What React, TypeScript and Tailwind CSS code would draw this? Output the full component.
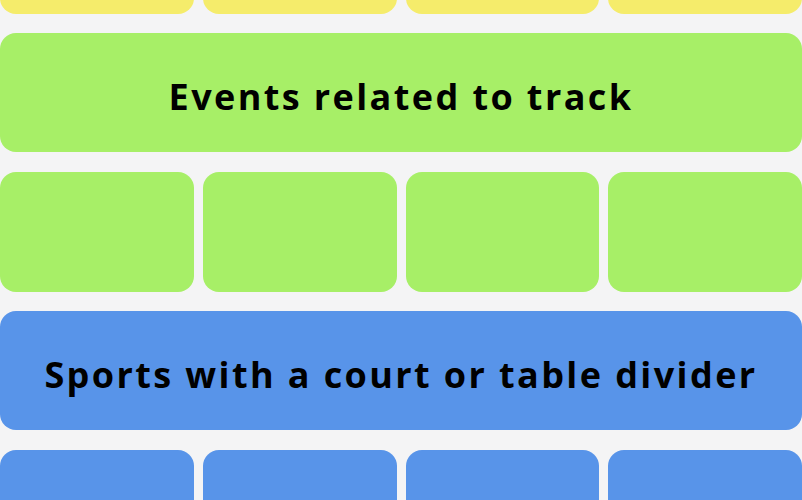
const groups = [
  { label: "", tile: "bg-[#f5ec6b]" },
  { label: "Events related to track", tile: "bg-[#a7ef67]" },
  { label: "Sports with a court or table divider", tile: "bg-[#5894e9]" },
];

function TileRow({ color }: { color: string }) {
  return (
    <div className="grid grid-cols-4 gap-x-[9px]">
      {[0, 1, 2, 3].map((i) => (
        <div key={i} className={`h-[120px] rounded-[16px] ${color}`} />
      ))}
    </div>
  );
}

export default function App() {
  return (
    <div className="h-[500px] w-[802px] overflow-hidden bg-[#f4f4f5] font-['Open_Sans',sans-serif]">
      <div className="-mt-[106.5px] flex flex-col gap-y-[19.5px]">
        {groups.map((g, i) => (
          <div key={i} className="flex flex-col gap-y-[19.5px]">
            {g.label && (
              <div
                className={`flex h-[119px] items-center justify-center rounded-[16px] ${g.tile}`}
              >
                <span className="pt-[8px] text-[36px] leading-none font-bold tracking-[2.4px] text-black">
                  {g.label}
                </span>
              </div>
            )}
            <TileRow color={g.tile} />
          </div>
        ))}
      </div>
    </div>
  );
}
